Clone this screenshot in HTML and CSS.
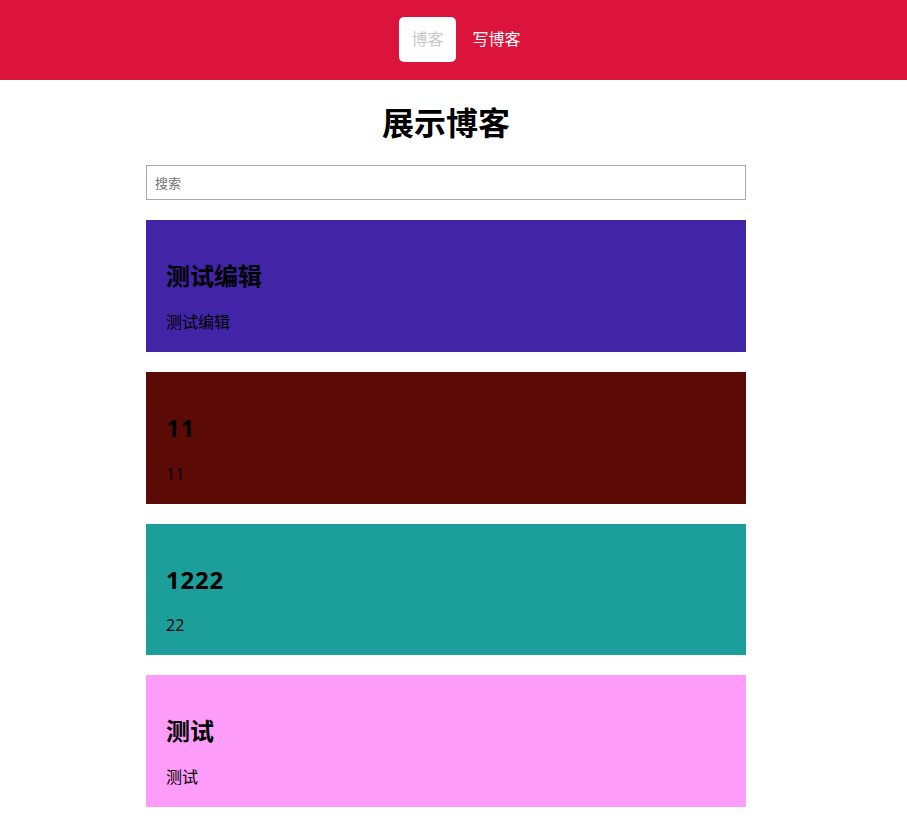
FILE: index.html
```html
<!DOCTYPE html>
<html lang="zh">
<head>
<meta charset="utf-8">
<title>展示博客</title>
<link rel="stylesheet" href="styles.css">
</head>
<body>
<header class="topbar">
  <nav class="nav">
    <a class="nav-link active" href="#">博客</a>
    <a class="nav-link" href="#">写博客</a>
  </nav>
</header>
<main class="page">
  <h1 class="title">展示博客</h1>
  <input class="search" type="text" placeholder="搜索">
  <div class="blog card-purple">
    <h2>测试编辑</h2>
    <p>测试编辑</p>
  </div>
  <div class="blog card-maroon">
    <h2 class="num">11</h2>
    <p>11</p>
  </div>
  <div class="blog card-teal">
    <h2 class="num">1222</h2>
    <p>22</p>
  </div>
  <div class="blog card-pink">
    <h2>测试</h2>
    <p>测试</p>
  </div>
</main>
</body>
</html>
```
FILE: styles.css
```css
html, body {
  margin: 0;
  padding: 0;
  background: #fff;
  font-family: "Open Sans", "Noto Sans CJK SC", sans-serif;
}
.topbar {
  background: #dc143c;
  height: 80px;
}
.nav {
  width: 892px;
  height: 80px;
  box-sizing: border-box;
  padding-left: 40px;
  display: flex;
  justify-content: center;
  align-items: center;
  gap: 5px;
}
.nav-link {
  display: block;
  padding: 0 12px;
  height: 45px;
  line-height: 45px;
  font-size: 16px;
  color: #fff;
  text-decoration: none;
  border-radius: 5px;
  margin-top: -1px;
}
.nav-link.active {
  background: #fff;
  color: #c8c8c8;
}
.page {
  width: 600px;
  margin: 0 auto;
  padding-bottom: 20px;
  position: relative;
  left: -7.5px;
}
.title {
  text-align: center;
  font-size: 32px;
  font-weight: bold;
  margin: 21px 0 21px;
  line-height: 43px;
}
.search {
  display: block;
  width: 600px;
  height: 35px;
  box-sizing: border-box;
  border: 1px solid #a9a9a9;
  padding: 0 8px;
  font-size: 13px;
  font-family: "Open Sans", "Noto Sans CJK SC", sans-serif;
  margin: 0 0 20px;
  outline: none;
}
.search::placeholder {
  color: #757575;
}
.blog {
  padding: 20px;
  margin-bottom: 20px;
  color: #000;
}
.blog h2 {
  margin: 20px 0 20px;
  font-size: 24px;
  line-height: 31.75px;
  font-weight: bold;
}
.blog h2.num {
  letter-spacing: 0.8px;
}
.blog p {
  margin: 0;
  font-size: 16px;
  line-height: 20px;
}
.card-purple { background: #4125a6; }
.card-maroon { background: #5c0a05; }
.card-teal { background: #1c9e9b; }
.card-pink { background: #fd9cf9; }
```
